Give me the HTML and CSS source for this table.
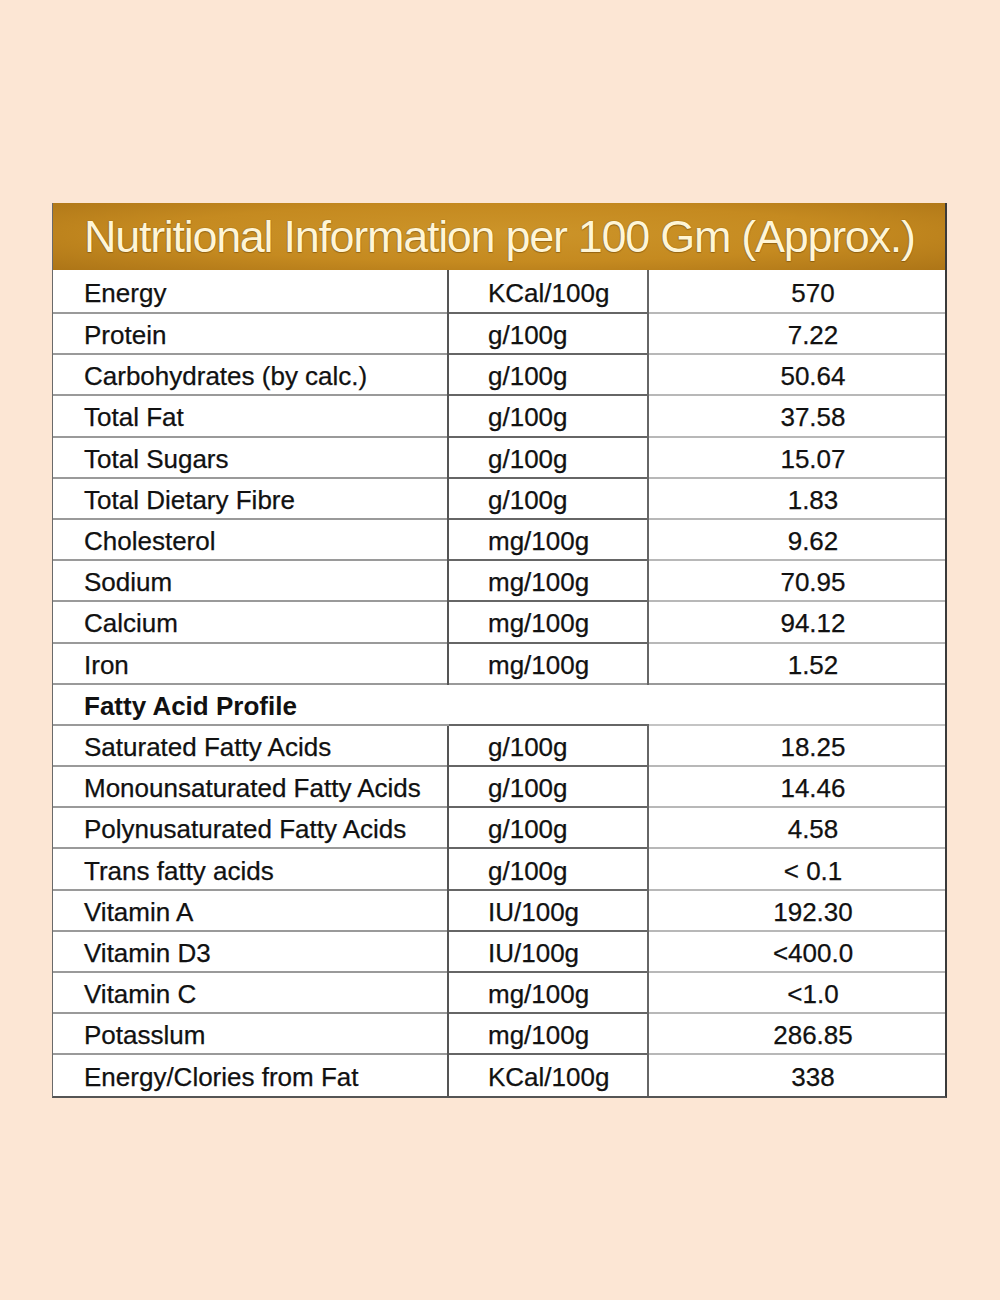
FILE: index.html
```html
<!DOCTYPE html>
<html lang="en">
<head>
<meta charset="utf-8">
<title>Nutritional Information</title>
<link rel="stylesheet" href="styles.css">
</head>
<body>
<div class="panel">
  <div class="title">Nutritional Information per 100 Gm (Approx.)</div>
  <table class="nut">
    <tbody>
      <tr><td class="name">Energy</td><td class="unit">KCal/100g</td><td class="val">570</td></tr>
      <tr><td class="name">Protein</td><td class="unit">g/100g</td><td class="val">7.22</td></tr>
      <tr><td class="name">Carbohydrates (by calc.)</td><td class="unit">g/100g</td><td class="val">50.64</td></tr>
      <tr><td class="name">Total Fat</td><td class="unit">g/100g</td><td class="val">37.58</td></tr>
      <tr><td class="name">Total Sugars</td><td class="unit">g/100g</td><td class="val">15.07</td></tr>
      <tr><td class="name">Total Dietary Fibre</td><td class="unit">g/100g</td><td class="val">1.83</td></tr>
      <tr><td class="name">Cholesterol</td><td class="unit">mg/100g</td><td class="val">9.62</td></tr>
      <tr><td class="name">Sodium</td><td class="unit">mg/100g</td><td class="val">70.95</td></tr>
      <tr><td class="name">Calcium</td><td class="unit">mg/100g</td><td class="val">94.12</td></tr>
      <tr><td class="name">Iron</td><td class="unit">mg/100g</td><td class="val">1.52</td></tr>
      <tr class="section"><td class="name" colspan="3">Fatty Acid Profile</td></tr>
      <tr><td class="name">Saturated Fatty Acids</td><td class="unit">g/100g</td><td class="val">18.25</td></tr>
      <tr><td class="name">Monounsaturated Fatty Acids</td><td class="unit">g/100g</td><td class="val">14.46</td></tr>
      <tr><td class="name">Polynusaturated Fatty Acids</td><td class="unit">g/100g</td><td class="val">4.58</td></tr>
      <tr><td class="name">Trans fatty acids</td><td class="unit">g/100g</td><td class="val">&lt; 0.1</td></tr>
      <tr><td class="name">Vitamin A</td><td class="unit">IU/100g</td><td class="val">192.30</td></tr>
      <tr><td class="name">Vitamin D3</td><td class="unit">IU/100g</td><td class="val">&lt;400.0</td></tr>
      <tr><td class="name">Vitamin C</td><td class="unit">mg/100g</td><td class="val">&lt;1.0</td></tr>
      <tr><td class="name">Potasslum</td><td class="unit">mg/100g</td><td class="val">286.85</td></tr>
      <tr><td class="name">Energy/Clories from Fat</td><td class="unit">KCal/100g</td><td class="val">338</td></tr>
    </tbody>
  </table>
</div>
</body>
</html>
```

FILE: styles.css
```css
html, body {
  margin: 0;
  padding: 0;
}
body {
  background: #fce6d4;
  font-family: "Liberation Sans", Arial, sans-serif;
  color: #111;
}
.panel {
  width: 895px;
  margin: 203px 0 0 52px;
  background: #ffffff;
  border-left: 1px solid #6a6a6a;
  border-right: 2px solid #3a3a3a;
  border-bottom: 2px solid #555;
  box-sizing: border-box;
}
.title {
  height: 67px;
  box-sizing: border-box;
  padding: 9px 0 0 31px;
  background:
    radial-gradient(ellipse at 50% 45%, #cc9429 0%, #c58a20 55%, #ad7517 100%);
  color: #fff5d6;
  font-size: 45px;
  letter-spacing: -1.3px;
  line-height: 50px;
  white-space: nowrap;
  text-shadow: 0 0 1px rgba(90, 55, 0, 0.8), 0 1px 1px rgba(90, 55, 0, 0.4);
}
.nut {
  width: 100%;
  border-collapse: collapse;
  table-layout: fixed;
}
.nut tr {
  height: 41.2px;
}
.nut tr:first-child {
  height: 43px;
}
.nut td {
  font-size: 26px;
  line-height: 28px;
  padding: 3px 0 0 0;
  white-space: nowrap;
  border-top: 2px solid #9a9a9a;
  box-sizing: border-box;
  -webkit-text-stroke: 0.25px #111;
}
.nut tr:first-child td {
  border-top: none;
}
.name {
  width: 395px;
  padding-left: 31px !important;
}
.unit {
  width: 200px;
  padding-left: 39px !important;
  border-left: 2px solid #555;
  border-right: 2px solid #666;
  border-top-color: #666 !important;
}
.val {
  text-align: center;
  padding-left: 32px !important;
  border-top-color: #b8b8b8 !important;
}
.section td {
  font-weight: bold;
  -webkit-text-stroke: 0;
  border-top-color: #9a9a9a !important;
}
.section + tr td.val {
  border-top-color: #c4c4c4 !important;
}
```
